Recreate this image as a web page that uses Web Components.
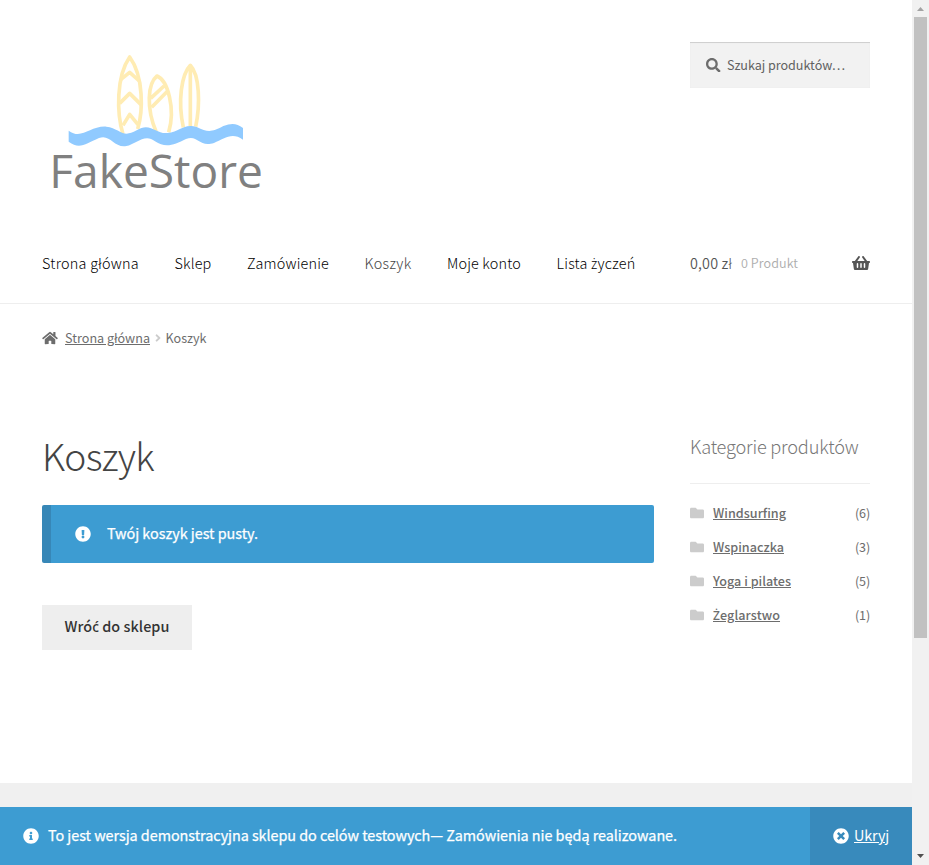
<!DOCTYPE html>
<html lang="pl">
<head>
<meta charset="utf-8">
<title>Koszyk – FakeStore</title>
<style>
html,body{margin:0;height:100%;overflow:hidden;background:#fff}
body{font-family:"Noto Sans CJK JP","Noto Sans",sans-serif;color:#6d6d6d;font-size:14.4px}
</style>
</head>
<body>
<store-page></store-page>
<script>
const define=(name,html,init)=>customElements.define(name,class extends HTMLElement{
  connectedCallback(){
    if(this.shadowRoot)return;
    const t=document.createElement('template');
    t.innerHTML=html;
    this.attachShadow({mode:'open'}).append(t.content.cloneNode(true));
    if(init)init.call(this,this.shadowRoot);
  }
});

const ICONS={
search:['0 0 512 512','M505 442.7L405.3 343c-4.5-4.5-10.6-7-17-7H372c27.6-35.3 44-79.7 44-128C416 93.1 322.9 0 208 0S0 93.1 0 208s93.1 208 208 208c48.3 0 92.7-16.4 128-44v16.3c0 6.4 2.5 12.5 7 17l99.7 99.7c9.4 9.4 24.6 9.4 33.9 0l28.3-28.3c9.4-9.4 9.4-24.6.1-34zM208 336c-70.7 0-128-57.2-128-128 0-70.7 57.2-128 128-128 70.7 0 128 57.2 128 128 0 70.7-57.2 128-128 128z'],
home:['0 0 576 512','M280.37 148.26L96 300.11V464a16 16 0 0 0 16 16l112.06-.29a16 16 0 0 0 15.92-16V368a16 16 0 0 1 16-16h64a16 16 0 0 1 16 16v95.64a16 16 0 0 0 16 16.05L464 480a16 16 0 0 0 16-16V300L295.67 148.26a12.19 12.19 0 0 0-15.3 0zM571.6 251.47L488 182.56V44.05a12 12 0 0 0-12-12h-56a12 12 0 0 0-12 12v72.61L318.47 43a48 48 0 0 0-61 0L4.34 251.47a12 12 0 0 0-1.6 16.9l25.5 31A12 12 0 0 0 45.15 301l235.22-193.74a12.19 12.19 0 0 1 15.3 0L530.9 301a12 12 0 0 0 16.9-1.6l25.5-31a12 12 0 0 0-1.7-16.93z'],
angle:['0 0 256 512','M224.3 273l-136 136c-9.4 9.4-24.6 9.4-33.9 0l-22.6-22.6c-9.4-9.4-9.4-24.6 0-33.9l96.4-96.4-96.4-96.4c-9.4-9.4-9.4-24.6 0-33.9L54.3 103c9.4-9.4 24.6-9.4 33.9 0l136 136c9.5 9.4 9.5 24.6.1 34z'],
basket:['0 0 576 512','M576 216v16c0 13.255-10.745 24-24 24h-8l-26.113 182.788C514.509 462.435 494.257 480 470.37 480H105.63c-23.887 0-44.139-17.565-47.518-41.212L32 256h-8c-13.255 0-24-10.745-24-24v-16c0-13.255 10.745-24 24-24h67.341l106.78-146.821c10.395-14.292 30.407-17.453 44.701-7.058 14.293 10.395 17.453 30.408 7.058 44.701L170.477 192h235.046L326.12 82.821c-10.395-14.292-7.234-34.306 7.059-44.701 14.291-10.395 34.306-7.235 44.701 7.058L484.659 192H552c13.255 0 24 10.745 24 24zM312 392V280c0-13.255-10.745-24-24-24s-24 10.745-24 24v112c0 13.255 10.745 24 24 24s24-10.745 24-24zm112 0V280c0-13.255-10.745-24-24-24s-24 10.745-24 24v112c0 13.255 10.745 24 24 24s24-10.745 24-24zm-224 0V280c0-13.255-10.745-24-24-24s-24 10.745-24 24v112c0 13.255 10.745 24 24 24s24-10.745 24-24z'],
exclamation:['0 0 512 512','M504 256c0 136.997-111.043 248-248 248S8 392.997 8 256C8 119.083 119.043 8 256 8s248 111.083 248 248zm-248 50c-25.405 0-46 20.595-46 46s20.595 46 46 46 46-20.595 46-46-20.595-46-46-46zm-43.673-165.346l7.418 136c.347 6.364 5.609 11.346 11.982 11.346h48.546c6.373 0 11.635-4.982 11.982-11.346l7.418-136c.375-6.874-5.098-12.654-11.982-12.654h-63.383c-6.884 0-12.356 5.78-11.981 12.654z'],
folder:['0 0 512 512','M464 128H272l-64-64H48C21.49 64 0 85.49 0 112v288c0 26.51 21.49 48 48 48h416c26.51 0 48-21.49 48-48V176c0-26.51-21.49-48-48-48z'],
info:['0 0 512 512','M256 8C119.043 8 8 119.083 8 256c0 136.997 111.043 248 248 248s248-111.003 248-248C504 119.083 392.957 8 256 8zm0 110c23.196 0 42 18.804 42 42s-18.804 42-42 42-42-18.804-42-42 18.804-42 42-42zm56 254c0 6.627-5.373 12-12 12h-88c-6.627 0-12-5.373-12-12v-24c0-6.627 5.373-12 12-12h12v-64h-12c-6.627 0-12-5.373-12-12v-24c0-6.627 5.373-12 12-12h64c6.627 0 12 5.373 12 12v100h12c6.627 0 12 5.373 12 12v24z'],
times:['0 0 512 512','M256 8C119 8 8 119 8 256s111 248 248 248 248-111 248-248S393 8 256 8zm121.6 313.1c4.7 4.7 4.7 12.3 0 17L338 377.6c-4.7 4.7-12.3 4.7-17 0L256 312l-65.1 65.6c-4.7 4.7-12.3 4.7-17 0L134.4 338c-4.7-4.7-4.7-12.3 0-17l65.6-65-65.6-65.1c-4.7-4.7-4.7-12.3 0-17l39.6-39.6c4.7-4.7 12.3-4.7 17 0l65 65.7 65.1-65.6c4.7-4.7 12.3-4.7 17 0l39.6 39.6c4.7 4.7 4.7 12.3 0 17L312 256l65.6 65.1z']
};
define('fa-icon','<style>:host{display:block;flex:none}svg{display:block;width:100%;height:100%;fill:currentColor}</style><svg><path/></svg>',function(r){
  const [box,d]=ICONS[this.getAttribute('name')];
  r.querySelector('svg').setAttribute('viewBox',box);
  r.querySelector('path').setAttribute('d',d);
});

/* A single line of text tracked to fill the measure given in w.
   The base family has no precomposed ż and ć, so those come from Noto Sans. */
define('fit-text','<style>:host{display:block;flex:none;white-space:nowrap}span{display:inline-block;text-decoration:inherit}::slotted(i){font-family:"Noto Sans";font-style:normal;font-size:.95em;line-height:0}</style><span><slot></slot></span>',function(r){
  const s=r.querySelector('span'),w=+this.getAttribute('w');
  const n=[...this.textContent].length;
  this.innerHTML=this.textContent.replace(/[żŻć]/g,'<i>$&</i>');
  this.style.width=w+'px';
  s.style.letterSpacing=(w-s.getBoundingClientRect().width)/n+'px';
});

define('store-logo',`<style>:host{display:block;width:230px;height:155px}svg{display:block;overflow:visible}</style>
<svg width="230" height="165" viewBox="0 0 690 495">
<g fill="none" stroke="#ffecb3" stroke-width="11" stroke-linejoin="round">
<path d="M249 268C230 205 228 95 269 36C312 95 309 200 293 252"/>
<path d="M242 104L269 82L298 108M239 175L269 145L303 179M249 241L269 208L294 239"/>
<path d="M349 262C318 190 323 115 351 93C383 106 407 190 386 262M332 160L372 123M335 187L383 138"/>
<path d="M430 247C413 170 424 88 451 61C479 90 481 180 467 245M451 65V244"/>
</g>
<path fill="#90caff" d="M86 257C125 286 150 242 199 245C240 249 246 282 290 256C330 229 348 268 382 264C423 260 430 234 470 246C504 262 514 262 550 243C576 233 590 235 609 249V284C576 260 552 281 522 294C475 308 475 268 438 282C403 300 376 310 345 289C315 263 287 298 259 303C221 309 211 266 177 279C137 296 119 315 86 290Z"/>
<text x="28" y="428" textLength="641" lengthAdjust="spacingAndGlyphs" font-family="Open Sans" font-size="139" fill="#808080">FakeStore</text>
</svg>`);

define('search-box',`<style>:host{display:flex;box-sizing:border-box;width:180px;height:46px;background:#f2f2f2;border-top:1px solid #d0d0d0;padding:0 0 1px 16px;align-items:center;color:#616161;box-shadow:inset 0 0 1px #ddd}
fa-icon{width:14.500px;height:14.500px;margin-right:6.500px;color:#6d6d6d}fit-text{font-size:12.6px;line-height:20px}</style>
<fa-icon name="search"></fa-icon><fit-text w="118">Szukaj produktów…</fit-text>`);

define('main-nav',`<style>:host{display:flex;width:648px;gap:35.5px;margin-top:-1px;font-size:14.4px;line-height:26px;font-weight:300;color:#000}
.on{color:#444}</style>
<fit-text w="97">Strona główna</fit-text><fit-text w="37">Sklep</fit-text><fit-text w="82">Zamówienie</fit-text><fit-text class="on" w="47">Koszyk</fit-text><fit-text w="74">Moje konto</fit-text><fit-text w="79">Lista życzeń</fit-text>`);

define('mini-cart',`<style>:host{display:flex;width:180px;align-items:center;margin-top:-1px;line-height:26px;font-size:14.4px;font-weight:350;color:#555}
.n{margin-left:9px;font-size:12.6px;color:#adadad}fa-icon{width:18px;height:16px;margin-left:auto}</style>
<fit-text w="42">0,00 zł</fit-text><fit-text class="n" w="57">0 Produkt</fit-text><fa-icon name="basket"></fa-icon>`);

define('bread-crumb',`<style>:host{display:flex;align-items:center;font-size:12.6px;line-height:24px;color:#6d6d6d}
.h{width:16px;height:14px;margin-right:7px}.a{width:6px;height:12px;margin:0 4.5px 0 5px;color:#ccc}.u{text-decoration:underline}</style>
<fa-icon class="h" name="home"></fa-icon><fit-text class="u" w="85">Strona główna</fit-text><fa-icon class="a" name="angle"></fa-icon><fit-text w="41">Koszyk</fit-text>`);

define('cart-notice',`<style>:host{display:flex;box-sizing:border-box;width:612px;height:58px;align-items:center;background:#3d9cd2;border-left:9px solid #3787b7;border-radius:2px;color:#fff;padding-left:24px;font-size:14.4px;font-weight:400}
fa-icon{width:16px;height:16px;margin-right:16px}fit-text{line-height:26px;padding-bottom:2px;-webkit-text-stroke:.25px #fff}</style>
<fa-icon name="exclamation"></fa-icon><fit-text w="151">Twój koszyk jest pusty.</fit-text>`);

define('shop-button',`<style>:host{display:flex;width:150px;height:45px;align-items:center;justify-content:center;background:#eee;color:#333;font-size:14.4px;font-weight:500;line-height:26px}fit-text{padding-bottom:3px}</style><fit-text w="105">Wróć do sklepu</fit-text>`);

define('category-row',`<style>:host{display:flex;height:34px;align-items:center;font-size:12.6px;line-height:24px}
fa-icon{width:14px;height:14px;margin-right:9px;color:#ccc}b{font-weight:500;text-decoration:underline}b fit-text{text-decoration:inherit}.c{margin-left:auto}</style>
<fa-icon name="folder"></fa-icon><b></b><fit-text class="c" w="15"></fit-text>`,function(r){
  const [name,w,count]=['name','w','count'].map(k=>this.getAttribute(k));
  r.querySelector('b').innerHTML='<fit-text w="'+w+'">'+name+'</fit-text>';
  const c=document.createElement('fit-text');
  c.className='c';c.setAttribute('w','15');c.textContent='('+count+')';
  r.querySelector('.c').replaceWith(c);
});

define('side-bar',`<style>:host{display:block;width:180px}
header{height:52px;border-bottom:1px solid #eee;box-sizing:border-box;font-size:18.2px;line-height:28px;font-weight:300;color:#777;margin-bottom:12px}</style>
<header><fit-text w="168.5">Kategorie produktów</fit-text></header>
<category-row name="Windsurfing" w="73" count="6"></category-row><category-row name="Wspinaczka" w="71" count="3"></category-row><category-row name="Yoga i pilates" w="78" count="5"></category-row><category-row name="Żeglarstwo" w="67" count="1"></category-row>`);

define('demo-notice',`<style>:host{display:flex;height:58px;background:#3d9cd2;color:#fff;font-size:14.4px;font-weight:400;line-height:26px}
.m{display:flex;align-items:center;flex:1;padding-left:23px}fa-icon{width:16px;height:16px;margin-right:9px}fit-text{padding-bottom:2px}.m fit-text{-webkit-text-stroke:.25px #fff}
.x{display:flex;align-items:center;width:79px;padding-left:23px;background:#388abc}.x fa-icon{margin-right:5px}.x fit-text{text-decoration:underline}</style>
<div class="m"><fa-icon name="info"></fa-icon><fit-text w="629">To jest wersja demonstracyjna sklepu do celów testowych— Zamówienia nie będą realizowane.</fit-text></div>
<div class="x"><fa-icon name="times"></fa-icon><fit-text w="35">Ukryj</fit-text></div>`);

define('scroll-bar',`<style>:host{display:flex;flex-direction:column;align-items:center;width:17px;background:#f1f1f1}
svg{display:block;flex:none}i{width:13px;height:621px;background:#c1c1c1}.d{margin-top:auto}</style>
<svg width="17" height="17"><path d="M5 11h7L8.5 7z" fill="#a3a3a3"/></svg><i></i><svg class="d" width="17" height="17"><path d="M5 6h7L8.500 10z" fill="#505050"/></svg>`);

define('store-page',`<style>:host{display:grid;grid-template-columns:912px 17px;height:865px}
.p{display:flex;flex-direction:column;height:865px}
.head{box-sizing:border-box;height:304px;padding:42px 42px 0;border-bottom:1px solid #eee}
.top{display:flex;justify-content:space-between;height:209px}store-logo{margin:3px 0 0 -2px}
.nav{display:flex}
bread-crumb{padding:22px 42px 0;height:24px}
.main{display:flex;justify-content:space-between;padding:82px 42px 0;height:351px;box-sizing:content-box}
h1{margin:0 0 27px;font-weight:300;font-size:37.2px;line-height:46px;color:#444}
shop-button{margin-top:42px}
.foot{flex:1;background:#f0f0f0}</style>
<div class="p"><div class="head"><div class="top"><store-logo></store-logo><search-box></search-box></div><div class="nav"><main-nav></main-nav><mini-cart></mini-cart></div></div>
<bread-crumb></bread-crumb>
<div class="main"><div><h1><fit-text w="112">Koszyk</fit-text></h1><cart-notice></cart-notice><shop-button></shop-button></div><side-bar></side-bar></div>
<div class="foot"></div><demo-notice></demo-notice></div><scroll-bar></scroll-bar>`);
</script>
</body>
</html>
